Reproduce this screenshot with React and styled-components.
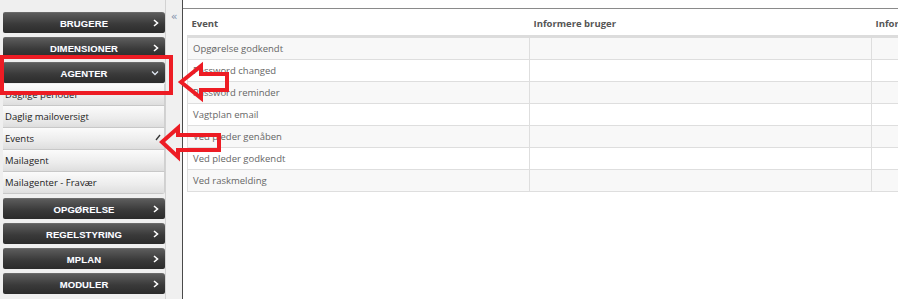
import React from "react";
import styled, { createGlobalStyle } from "styled-components";

const GlobalStyle = createGlobalStyle`
  html, body {
    margin: 0;
    padding: 0;
    background: #fff;
    overflow: hidden;
  }
  body {
    font-family: "Open Sans", "Liberation Sans", sans-serif;
  }
`;

const menuTop = ["BRUGERE", "DIMENSIONER"];
const menuBottom = ["OPGØRELSE", "REGELSTYRING", "MPLAN", "MODULER"];
const agentItems = [
  "Daglige perioder",
  "Daglig mailoversigt",
  "Events",
  "Mailagent",
  "Mailagenter - Fravær",
];
const events = [
  "Opgørelse godkendt",
  "Password changed",
  "Password reminder",
  "Vagtplan email",
  "Ved pleder genåben",
  "Ved pleder godkendt",
  "Ved raskmelding",
];

const Page = styled.div`
  position: relative;
  display: flex;
  width: 898px;
  height: 299px;
  overflow: hidden;
`;

const Sidebar = styled.nav`
  width: 162px;
  flex-shrink: 0;
  padding: 12px 0 0 3px;
  background: #efefef;
  border-right: 1px solid #d2d2d2;
  display: flex;
  flex-direction: column;
`;

const MenuButton = styled.div`
  position: relative;
  height: 21px;
  margin-bottom: ${(p) => (p.open ? "1px" : "4px")};
  background: linear-gradient(#5c5c5c, #3a3a3a 55%, #2b2b2b);
  border-top: 1px solid #6a6a6a;
  box-sizing: border-box;
  border-radius: 2px 3px 2px 2px;
  display: flex;
  align-items: center;
  justify-content: center;
  color: #fff;
  font-family: "Liberation Sans", Arial, sans-serif;
  font-weight: bold;
  font-size: 9.5px;
  letter-spacing: 0.1px;
  text-shadow: 0 0 1px rgba(120, 150, 220, 0.35);
`;

const Chevron = styled.svg`
  position: absolute;
  right: 6px;
  top: 50%;
  transform: translateY(-50%);
`;

const SubList = styled.div`
  display: flex;
  flex-direction: column;
  margin-bottom: 4px;
  border-radius: 0 0 3px 0;
  overflow: hidden;
`;

const SubItem = styled.div`
  position: relative;
  height: 21px;
  border-bottom: 1px solid #c8c8c8;
  border-right: 1px solid #d0d0d0;
  background: linear-gradient(#fbfbfb, #ececec 60%, #dedede);
  display: flex;
  align-items: center;
  padding-left: 2px;
  font-size: 9.5px;
  color: #222;
`;

const Collapse = styled.div`
  width: 16px;
  flex-shrink: 0;
  background: #f0f0f0;
  border-right: 1px solid #4a4a4a;
  display: flex;
  justify-content: center;
  padding-top: 11px;
  color: #7f8faa;
  font-size: 11px;
  line-height: 1;
  font-family: "DejaVu Sans", sans-serif;
`;

const Content = styled.main`
  flex: 1;
  margin-top: 8px;
  border-top: 1px solid #8a8a8a;
  padding: 3px 0 0 4px;
  overflow: hidden;
`;

const Table = styled.table`
  border-collapse: collapse;
  table-layout: fixed;
  width: 1026px;
  font-size: 9.5px;
  color: #666;
`;

const Col = styled.col`
  width: 342px;
`;

const HeadCell = styled.th`
  height: 23px;
  text-align: left;
  font-weight: 700;
  color: #555;
  padding: 0 4px;
  border-bottom: 3px solid #dcdcdc;
  white-space: nowrap;
`;

const Row = styled.tr`
  background: ${(p) => (p.odd ? "#f8f8f8" : "#fff")};
`;

const Cell = styled.td`
  height: 21px;
  padding: 0 5px;
  border: 1px solid #dedede;
  border-top: none;
  white-space: nowrap;
`;

const Overlay = styled.svg`
  position: absolute;
  left: 0;
  top: 0;
  pointer-events: none;
`;

const RightChevron = () => (
  <Chevron width="6" height="8" viewBox="0 0 6 8">
    <path d="M1 1 L4.5 4 L1 7" stroke="#fff" strokeWidth="1.6" fill="none" />
  </Chevron>
);

const DownChevron = () => (
  <Chevron width="8" height="6" viewBox="0 0 8 6">
    <path d="M1 1.5 L4 4.5 L7 1.5" stroke="#dfe6f0" strokeWidth="1.3" fill="none" />
  </Chevron>
);

const ActiveMark = () => (
  <Chevron width="6" height="10" viewBox="0 0 6 10" style={{ right: 3 }}>
    <path d="M5 1 L1 6" stroke="#333" strokeWidth="1.3" fill="none" />
  </Chevron>
);

export default function App() {
  return (
    <>
      <GlobalStyle />
      <Page>
        <Sidebar>
          {menuTop.map((m) => (
            <MenuButton key={m}>
              {m}
              <RightChevron />
            </MenuButton>
          ))}
          <MenuButton open>
            AGENTER
            <DownChevron />
          </MenuButton>
          <SubList>
            {agentItems.map((item) => (
              <SubItem key={item}>
                {item}
                {item === "Events" && <ActiveMark />}
              </SubItem>
            ))}
          </SubList>
          {menuBottom.map((m) => (
            <MenuButton key={m}>
              {m}
              <RightChevron />
            </MenuButton>
          ))}
        </Sidebar>
        <Collapse>«</Collapse>
        <Content>
          <Table>
            <colgroup>
              <Col />
              <Col />
              <Col />
            </colgroup>
            <thead>
              <tr>
                <HeadCell>Event</HeadCell>
                <HeadCell>Informere bruger</HeadCell>
                <HeadCell>Informere leder</HeadCell>
              </tr>
            </thead>
            <tbody>
              {events.map((e, i) => (
                <Row key={e} odd={i % 2 === 0}>
                  <Cell>{e}</Cell>
                  <Cell />
                  <Cell />
                </Row>
              ))}
            </tbody>
          </Table>
        </Content>
        <Overlay width="898" height="299" viewBox="0 0 898 299">
          <rect x="2" y="57" width="169" height="36" fill="none" stroke="#ed1c24" strokeWidth="4" />
          <polygon
            points="181,82 201,66 201,74 227,74 227,90 201,90 201,98"
            fill="none"
            stroke="#ed1c24"
            strokeWidth="4"
            strokeLinejoin="miter"
          />
          <polygon
            points="162,142 178,128 178,135 219,135 219,150 178,150 178,157"
            fill="none"
            stroke="#ed1c24"
            strokeWidth="4"
            strokeLinejoin="miter"
          />
        </Overlay>
      </Page>
    </>
  );
}
